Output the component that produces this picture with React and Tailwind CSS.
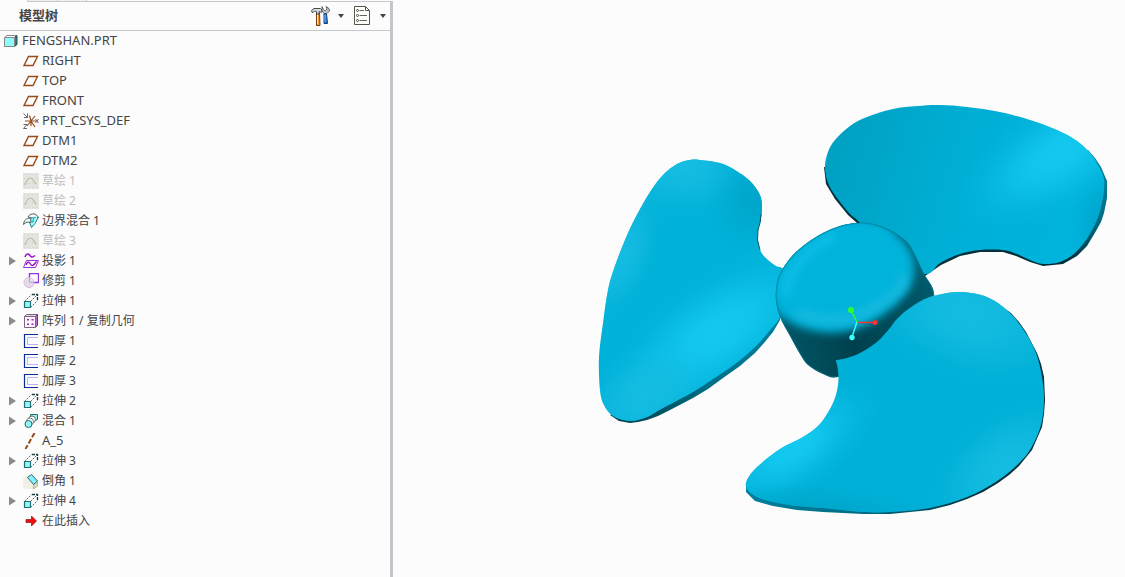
import React from 'react';

const tree = [
  { icon: 'plane', name: 'RIGHT' },
  { icon: 'plane', name: 'TOP' },
  { icon: 'plane', name: 'FRONT' },
  { icon: 'csys', name: 'PRT_CSYS_DEF' },
  { icon: 'plane', name: 'DTM1' },
  { icon: 'plane', name: 'DTM2' },
  { icon: 'sketch', name: '草绘 1', hidden: true },
  { icon: 'sketch', name: '草绘 2', hidden: true },
  { icon: 'boundary', name: '边界混合 1' },
  { icon: 'sketch', name: '草绘 3', hidden: true },
  { icon: 'project', name: '投影 1', expandable: true },
  { icon: 'trim', name: '修剪 1' },
  { icon: 'extrude', name: '拉伸 1', expandable: true },
  { icon: 'pattern', name: '阵列 1 / 复制几何', expandable: true },
  { icon: 'thicken', name: '加厚 1' },
  { icon: 'thicken', name: '加厚 2' },
  { icon: 'thicken', name: '加厚 3' },
  { icon: 'extrude', name: '拉伸 2', expandable: true },
  { icon: 'blend', name: '混合 1', expandable: true },
  { icon: 'axis', name: 'A_5' },
  { icon: 'extrude', name: '拉伸 3', expandable: true },
  { icon: 'chamfer', name: '倒角 1' },
  { icon: 'extrude', name: '拉伸 4', expandable: true },
  { icon: 'insert', name: '在此插入' }
];

// All drawn on a 16x16 grid
const icons = {
  part: (
    <>
      <path d="M0.5 4.5L3 2.5H13L10.5 4.5Z" fill="#fff" stroke="#888" />
      <path d="M10.5 4.5L13 2.5V11.5L10.5 13.5Z" fill="#2b8080" stroke="#2d4a4a" />
      <path d="M0.5 4.5H10.5V13.5H0.5Z" fill="#8ffafa" stroke="#888" />
    </>
  ),
  plane: <path d="M5.5 3.5H14.5L10 12.5H1Z" fill="none" stroke="#974c1a" strokeWidth="1.4" />,
  csys: (
    <>
      <path d="M8 8L6.5 2.5M8 8L12 3M8 8H13M8 8L12 14M8 8V13M8 8L4 13M8 8H2" stroke="#974c1a" strokeWidth="1.2" fill="none" />
      <path d="M0.5 0.5L4 4M4.5 0.5V4.5H1M12.5 6L15.5 10M15.5 6L12.5 10M0.5 11.5H4L0.5 15.5H4" stroke="#666" fill="none" />
    </>
  ),
  sketch: (
    <>
      <path d="M0 0H16V16H0Z" fill="#e3e3e1" />
      <path d="M1 1.5H16M1 14.5H16M1 5.5H16M1 10.5H16" stroke="#d2d2b6" strokeDasharray="1 3" />
      <path d="M2 12C3 9 5 5 7.5 5S11 9 13 11" fill="none" stroke="#bfbfa2" strokeWidth="1.2" />
    </>
  ),
  boundary: (
    <>
      <path d="M5 4C6 1.5 9 0.5 12 1L15.5 4L11 5.5Z" fill="#fff" stroke="#4d5a5c" />
      <path d="M7.5 5.5L14.5 3.5L12 9.5L8.5 14.5L7 9.5Z" fill="#9ffafa" />
      <path d="M0.5 11.5C1 7.5 3 5 7.5 5L8 9.5C5 8.5 3 9 0.5 11.5Z" fill="#e9ffff" stroke="#4d5a5c" />
      <path d="M15.5 4L12 10.5L8.5 14.5L6.5 9.5" fill="none" stroke="#187e83" />
      <path d="M7.5 5.5L13 4M7.5 9.5L11 8M11 4.5L9.5 9.5" fill="none" stroke="#20b4b8" />
    </>
  ),
  project: (
    <>
      <path d="M2 4C3 1 5 0 6.5 2S9 5 12 2.5" fill="none" stroke="#a010c8" strokeWidth="1.6" />
      <path d="M3.5 7.5H15.5L12.5 14.5H0.5Z" fill="#fff" stroke="#9b30dc" />
      <path d="M3 12C4 9 6 8 7.5 11S11 12 13.5 8.5" fill="none" stroke="#a010c8" strokeWidth="1.4" />
    </>
  ),
  trim: (
    <>
      <path d="M6.5 0.5H15.5V9.5H6.5Z" fill="#fff" stroke="#9335e3" strokeWidth="1.4" />
      <circle cx="6" cy="9.5" r="5" fill="#e1dfe3" stroke="#e4b1ed" />
      <path d="M6.5 4V9.5H11" fill="none" stroke="#b9a5ef" />
    </>
  ),
  extrude: (
    <>
      <path d="M1.5 8.5L8.5 1.5M7.5 8.5L14.5 1.5M7.5 14.5L14.5 7.5" stroke="#627477" strokeDasharray="2 1" />
      <path d="M9 1.5H14.5V7" fill="none" stroke="#193f42" strokeWidth="1.4" strokeDasharray="3 1" />
      <path d="M1.5 8.5H7.5V14.5H1.5Z" fill="#8ff7fa" stroke="#286f73" strokeWidth="1.2" />
    </>
  ),
  pattern: (
    <>
      <path d="M1.5 3.5L3.5 1.5H14.5L12.5 3.5Z" fill="#ead2f3" stroke="#78617e" />
      <path d="M12.5 3.5L14.5 1.5V12.5L12.5 14.5Z" fill="#b070c4" stroke="#6a3b77" />
      <path d="M1.5 3.5H12.5V14.5H1.5Z" fill="#fff5ff" stroke="#79677d" />
      <path d="M4 6H6V7.5H4ZM8.5 6H10.5V7.5H8.5ZM4 10.5H6V12H4ZM8.5 10.5H10.5V12H8.5Z" fill="#a31bc9" />
    </>
  ),
  thicken: (
    <>
      <path d="M15 1.5H1.5V14.5H15" fill="none" stroke="#092e98" strokeWidth="1.2" />
      <path d="M15 4.5H4.5V11.5H15" fill="none" stroke="#bbb4f6" />
    </>
  ),
  blend: (
    <>
      <path d="M7.5 1.5H14.5V6.5L11.5 8L8 6Z" fill="#9befee" stroke="#266a6e" />
      <circle cx="9" cy="6.5" r="3.5" fill="#fff" stroke="#626e70" />
      <circle cx="7" cy="8.5" r="3.5" fill="#fff" stroke="#788486" />
      <circle cx="5.5" cy="11" r="3.5" fill="#91f6fa" stroke="#266a6e" />
    </>
  ),
  axis: <path d="M11.5 0L2.5 16" stroke="#974c1a" strokeWidth="2" strokeDasharray="5 2" />,
  chamfer: (
    <>
      <path d="M0 5L4 2H8L14.5 10V13L10 16H0Z" fill="#f0f0e4" />
      <path d="M10.5 11V16L14.5 13V8" fill="#dadac9" stroke="#b7b7a5" />
      <path d="M4.5 4.5L8.5 1.5L14.5 8L10.5 11.5Z" fill="#86f1fa" stroke="#246a78" />
    </>
  ),
  insert: <path d="M3 6.5H8.5V3L13.5 8L8.5 13V9.5H3Z" fill="#ee0c0c" stroke="#8d1212" strokeWidth="0.7" />
};

function TreeIcon({ type }) {
  return (
    <svg className="w-4 h-4 shrink-0" viewBox="0 0 16 16" aria-hidden="true">
      {icons[type]}
    </svg>
  );
}

function TreeLabel({ name }) {
  // Latin-only names are set slightly larger than Chinese ones
  const size = /^[\w.]+$/.test(name) ? 'text-[13px] leading-[18px] pb-0.5' : 'text-xs leading-5';
  return <span className={`${size} whitespace-nowrap`}>{name}</span>;
}

function TreeRow({ item }) {
  return (
    <li className={`flex items-center h-5 pl-2 gap-[3px] ${item.hidden ? 'text-[#bdbdbd]' : ''}`}>
      <span className="w-3 shrink-0 flex items-center">
        {item.expandable && (
          <button type="button" aria-label={`展开 ${item.name}`}>
            <svg className="w-2 h-[10px] block" viewBox="0 0 8 10">
              <path d="M1 0.5L8 5L1 9.5Z" fill="#8a8a8a" />
            </svg>
          </button>
        )}
      </span>
      <TreeIcon type={item.icon} />
      <TreeLabel name={item.name} />
    </li>
  );
}

function Caret() {
  return (
    <svg className="w-2 h-1" viewBox="0 0 8 4" aria-hidden="true">
      <path d="M1 0H7L4 4Z" fill="#444" />
    </svg>
  );
}

function Toolbar() {
  return (
    <div className="flex items-center gap-2">
      <button type="button" aria-label="设置" className="flex items-center gap-1.5">
        <svg className="w-5 h-5" viewBox="0 0 20 20">
          <path d="M5.5 7H8.5L9 19.5H5.5Z" fill="#ef9b35" stroke="#7e3c13" />
          <path d="M6.5 8V18" stroke="#ffe7a6" />
          <path d="M0.5 4.5L3 2.5H9.5L11 4V6H9L8 5.5V8H5.5V5.5L3.5 5L1.5 7Z" fill="#d9dedf" stroke="#454d50" />
          <path d="M13 7.5H15.5L16.5 17.5H13Z" fill="#2474d2" stroke="#153f7c" />
          <path d="M14 9V16" stroke="#70c2f4" />
          <path d="M11 0.5L12.5 3.5L14 5L16 3L15 0.5L18 2.5L18.5 5L16 7.5H13L11 5Z" fill="#bdc4c6" stroke="#454d50" strokeWidth="0.8" />
        </svg>
        <Caret />
      </button>
      <button type="button" aria-label="显示" className="flex items-center gap-1.5">
        <svg className="w-5 h-5" viewBox="0 0 20 20">
          <path d="M1.5 0.5H12.5L16.5 4.5V18.5H1.5Z" fill="#fffffa" stroke="#555549" />
          <path d="M12.5 0.5V4.5H16.5" fill="none" stroke="#555549" />
          <path d="M6.5 4.5H11M6.5 9.5H14M6.5 14.5H14" stroke="#666" />
          <circle cx="4.5" cy="4.5" r="1" fill="#fff" stroke="#444" />
          <circle cx="4.5" cy="9.5" r="1" fill="#fff" stroke="#444" />
          <circle cx="4.5" cy="14.5" r="1" fill="#fff" stroke="#444" />
        </svg>
        <Caret />
      </button>
    </div>
  );
}

function ModelTree() {
  return (
    <aside className="w-[393px] shrink-0 flex flex-col">
      <div className="flex h-px pl-[27px]">
        <span className="w-[30px] border-l border-[#c4c9cd] bg-[#f1f1f1]" />
        <span className="w-[30px] border-x border-[#c4c9cd] bg-[#f1f1f1]" />
      </div>
      <div className="ml-[27px] border-t border-[#c4c9cd]" />
      <div className="flex-1 border-r-[3px] border-[#c2c6ca]">
        <header className="flex items-center justify-between h-[29px] pl-[19px] pr-[3px] border-b border-[#c4c9cd]">
          <h1 className="text-[13px] font-bold">模型树</h1>
          <Toolbar />
        </header>
        <div className="flex items-center h-5 pl-1 gap-0.5">
          <TreeIcon type="part" />
          <TreeLabel name="FENGSHAN.PRT" />
        </div>
        <ul>
          {tree.map((item) => (
            <TreeRow key={item.name} item={item} />
          ))}
        </ul>
      </div>
    </aside>
  );
}

// Closed smooth curve through a list of points
function smooth(pts) {
  const n = pts.length;
  let d = `M${pts[0][0]} ${pts[0][1]}`;
  for (let i = 0; i < n; i++) {
    const [p0, p1, p2, p3] = [pts[(i - 1 + n) % n], pts[i], pts[(i + 1) % n], pts[(i + 2) % n]];
    d += `C${p1[0] + (p2[0] - p0[0]) / 6} ${p1[1] + (p2[1] - p0[1]) / 6} ${p2[0] - (p3[0] - p1[0]) / 6} ${p2[1] - (p3[1] - p1[1]) / 6} ${p2[0]} ${p2[1]}`;
  }
  return d + 'Z';
}

const leftFace = smooth([
  [700, 160], [720, 163], [735, 170], [750, 181], [760, 195], [762, 207], [761, 218], [758, 230],
  [758, 241], [761, 252], [768, 260], [776, 266], [784, 270], [790, 290], [780, 317], [771, 329],
  [755, 347], [735, 364], [713, 379], [693, 392], [663, 408], [647, 417], [630, 421], [613, 416],
  [604, 405], [600, 390], [599, 357], [603, 323], [608, 290], [615, 266], [628, 233], [640, 209],
  [652, 189], [663, 175], [677, 164], [690, 160]
]);

const leftEdge =
  'M780 312L780 320L773 332L764 343L755 353L740 366L723 378L708 389L693 398L670 410L658 416L647 420L638 422L630 423L619 421L610 415L650 400L720 360Z';

const leftRim = 'M761 214Q761 222 758 230Q756 240 760 250';

const rightFace = smooth([
  [940, 105], [967, 107], [1000, 112], [1030, 120], [1057, 130], [1077, 141], [1090, 153], [1098, 165],
  [1104, 179], [1103, 197], [1098, 217], [1088, 237], [1075, 253], [1060, 262], [1043, 264], [1030, 260],
  [1017, 254], [1003, 250], [980, 250], [960, 254], [940, 263], [925, 274], [890, 260], [860, 223],
  [850, 214], [837, 198], [828, 183], [825, 167], [828, 152], [835, 140], [850, 126], [867, 117],
  [893, 109], [917, 106]
]);

const rightEdge =
  'M1088 150L1095 158L1101 167L1107 181L1107 198L1104 213L1101 222L1096 231L1087 246L1077 256L1063 264L1043 266L1030 262L1016 256L1003 252L980 252L960 256L941 265L925 276L890 260L857 223L848 215L835 199L826 184L824 167L900 180L1050 180Z';

const bottomFace = smooth([
  [957, 292], [977, 294], [993, 300], [1010, 313], [1025, 332], [1036, 353], [1042, 377], [1044, 400],
  [1041, 425], [1031, 448], [1018, 464], [997, 481], [967, 497], [930, 508], [890, 512], [863, 512],
  [823, 508], [797, 506], [773, 502], [757, 497], [747, 489], [747, 480], [757, 467], [780, 449],
  [803, 437], [820, 424], [833, 403], [838, 385], [838, 370], [836, 361], [837, 360], [847, 358], [860, 353],
  [877, 342], [890, 328], [897, 319], [910, 308], [930, 297]
]);

const bottomEdge =
  'M992 300L1011 313L1019 322L1026 332L1037 353L1041 364L1044 377L1045 400L1044 414L1042 427L1032 450L1019 466L1009 475L998 483L983 492L967 499L950 505L930 510L890 514L863 514L823 512L797 510L773 506L755 501L746 492L746 484L800 480L960 460L1010 400Z';

const hub = smooth([
  [857, 223], [873, 224], [890, 230], [907, 242], [915, 255], [923, 272], [934, 296], [915, 325], [870, 365],
  [838, 377], [823, 374], [808, 365], [800, 354], [790, 336], [780, 317], [776, 300], [777, 283],
  [782, 270], [793, 255], [807, 243], [823, 233], [840, 226]
]);

const hubTop = smooth([
  [857, 217], [873, 219], [890, 226], [904, 240], [913, 256], [914, 274], [906, 292], [890, 309],
  [868, 324], [843, 332], [815, 331], [790, 322], [775, 310], [770, 290], [775, 268], [789, 250],
  [804, 237], [820, 227], [840, 219]
]);

function Fade({ id, color }) {
  return (
    <radialGradient id={id}>
      <stop offset="0" stopColor={color} />
      <stop offset="0.25" stopColor={color} stopOpacity="0.85" />
      <stop offset="0.5" stopColor={color} stopOpacity="0.5" />
      <stop offset="0.75" stopColor={color} stopOpacity="0.15" />
      <stop offset="1" stopColor={color} stopOpacity="0" />
    </radialGradient>
  );
}

function Spot({ x, y, rx, ry, angle = 0, fill }) {
  return <ellipse cx={x} cy={y} rx={rx} ry={ry} fill={fill} transform={`rotate(${angle} ${x} ${y})`} />;
}

function Fan() {
  return (
    <svg className="w-full h-full" viewBox="393 0 732 577" role="img" aria-label="FENGSHAN.PRT">
      <defs>
        <filter id="soft" x="-50%" y="-50%" width="200%" height="200%" colorInterpolationFilters="sRGB">
          <feGaussianBlur stdDeviation="5" />
        </filter>
        <Fade id="light" color="#14c9f0" />
        <Fade id="pale" color="#16bce1" />
        <Fade id="shade" color="#00a6cb" />
        <clipPath id="leftClip"><path d={leftFace} /></clipPath>
        <clipPath id="rightClip"><path d={rightFace} /></clipPath>
        <clipPath id="bottomClip"><path d={bottomFace} /></clipPath>
        <clipPath id="hubClip"><path d={hub} /></clipPath>
        <linearGradient id="rightFill" gradientUnits="userSpaceOnUse" x1="825" y1="150" x2="1070" y2="225">
          <stop offset="0" stopColor="#00a0c2" />
          <stop offset="0.5" stopColor="#00aed4" />
          <stop offset="1" stopColor="#00b4dc" />
        </linearGradient>
        <linearGradient id="edgeFill" gradientUnits="userSpaceOnUse" x1="620" y1="420" x2="780" y2="320">
          <stop offset="0" stopColor="#003f4c" />
          <stop offset="0.5" stopColor="#007088" />
          <stop offset="1" stopColor="#007f9b" />
        </linearGradient>
        <linearGradient id="rightEdgeFill" gradientUnits="userSpaceOnUse" x1="1107" y1="180" x2="1070" y2="260">
          <stop offset="0" stopColor="#007b95" />
          <stop offset="0.5" stopColor="#006a80" />
          <stop offset="1" stopColor="#00303b" />
        </linearGradient>
        <linearGradient id="bottomEdgeFill" gradientUnits="userSpaceOnUse" x1="746" y1="490" x2="980" y2="500">
          <stop offset="0" stopColor="#00809c" />
          <stop offset="0.5" stopColor="#006c84" />
          <stop offset="1" stopColor="#00303a" />
        </linearGradient>
        <linearGradient id="hubFill" gradientUnits="userSpaceOnUse" x1="785" y1="330" x2="935" y2="290">
          <stop offset="0" stopColor="#005464" />
          <stop offset="0.4" stopColor="#00404d" />
          <stop offset="1" stopColor="#005b6c" />
        </linearGradient>
      </defs>

      {/* Left blade */}
      <path d={leftEdge} fill="url(#edgeFill)" />
      <path d={leftFace} fill="#00b1d8" />
      <g clipPath="url(#leftClip)">
        <Spot x={683} y={168} rx={80} ry={55} fill="url(#pale)" />
        <Spot x={755} y={200} rx={50} ry={55} fill="url(#shade)" />
        <Spot x={622} y={255} rx={38} ry={80} angle={20} fill="url(#pale)" />
        <Spot x={716} y={334} rx={140} ry={62} angle={-35} fill="url(#light)" />
        <Spot x={645} y={395} rx={80} ry={50} angle={-30} fill="url(#pale)" />
      </g>
      <path d={leftRim} fill="none" stroke="#00586a" strokeWidth="1" />

      {/* Right blade */}
      <path d={rightEdge} fill="url(#rightEdgeFill)" />
      <path d={rightFace} fill="url(#rightFill)" />
      <g clipPath="url(#rightClip)">
        <Spot x={1060} y={153} rx={120} ry={54} angle={-32} fill="url(#light)" />
        <Spot x={1104} y={220} rx={36} ry={60} angle={15} fill="url(#shade)" />
      </g>

      {/* Hub */}
      <path d={hub} fill="url(#hubFill)" />
      <g clipPath="url(#hubClip)">
        <path d={hubTop} fill="#00b4dc" filter="url(#soft)" />
        <g filter="url(#soft)">
          <path d="M785 296Q789 258 835 235" fill="none" stroke="#12c4ec" strokeWidth="6" />
          <path d="M796 312Q838 330 876 307T900 276" fill="none" stroke="#1cb9de" strokeWidth="8" />
          <path d="M894 228L911 243L920 258L926 276" fill="none" stroke="#006c83" strokeWidth="4" opacity="0.6" />
        </g>
        <path d={hub} fill="none" stroke="#007f9a" strokeWidth="2" opacity="0.5" />
      </g>

      {/* Bottom blade */}
      <path d={bottomEdge} fill="url(#bottomEdgeFill)" />
      <path d={bottomFace} fill="#00b0d7" />
      <g clipPath="url(#bottomClip)">
        <Spot x={968} y={312} rx={125} ry={75} angle={20} fill="url(#pale)" />
        <Spot x={795} y={447} rx={100} ry={46} angle={-35} fill="url(#light)" />
        <Spot x={1005} y={465} rx={95} ry={55} angle={-38} fill="url(#pale)" />
        <Spot x={820} y={512} rx={130} ry={30} angle={4} fill="url(#shade)" />
      </g>

      {/* Spin centre */}
      <g strokeWidth="1.4">
        <path d="M857 322L851 310" stroke="#2cff2c" />
        <path d="M857 322.5H874" stroke="#ff3030" />
        <path d="M857 322L852 337" stroke="#3cffff" />
      </g>
      <circle cx="851" cy="310" r="3" fill="#2cff2c" />
      <circle cx="875" cy="322.5" r="2.5" fill="#ff3030" />
      <circle cx="852" cy="337.5" r="2.7" fill="#3cffff" />
    </svg>
  );
}

export default function App() {
  return (
    <div className="flex min-h-screen bg-[#fcfcfc] text-[#444] font-['Noto_Sans','Noto_Sans_CJK_SC',sans-serif]">
      <ModelTree />
      <main className="flex-1 min-w-0">
        <Fan />
      </main>
    </div>
  );
}
